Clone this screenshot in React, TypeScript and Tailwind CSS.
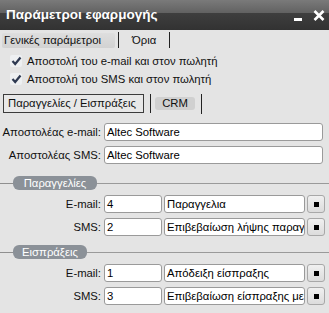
export default function App() {
  const font = { fontFamily: '"Liberation Sans", Arial, sans-serif' };

  const Check = () => (
    <span className="flex h-[12px] w-[12px] shrink-0 items-center justify-center rounded-[2px] bg-[#eef0f2]">
      <svg width="11" height="10" viewBox="0 0 11 10">
        <path d="M1.5 5 L4.2 8 L9.5 1.5" fill="none" stroke="#2f3a52" strokeWidth="2.2" />
      </svg>
    </span>
  );

  const Field = ({ children, className }: { children: React.ReactNode; className?: string }) => (
    <div
      className={`flex h-[18px] shrink-0 items-center overflow-hidden whitespace-nowrap rounded-[3px] border border-[#9a9a9a] bg-white pl-[2px] text-black ${className ?? ''}`}
    >
      {children}
    </div>
  );

  const DotButton = () => (
    <div className="flex h-[18px] w-[18px] items-center justify-center rounded-[3px] border border-[#a8a8a8] bg-[linear-gradient(#f0f0f0,#dcdcdc)]">
      <span className="h-[5px] w-[5px] bg-black" />
    </div>
  );

  const Section = ({ title, pillWidth }: { title: string; pillWidth: string }) => (
    <div className="flex h-[14px] items-center">
      <div className="h-px w-[13px] bg-[#8f8f8f]" />
      <div className={`flex h-[14px] shrink-0 items-center justify-center whitespace-nowrap rounded-[6px] bg-[#8b9198] text-white ${pillWidth}`}>
        {title}
      </div>
      <div className="h-px flex-1 bg-[#9a9a9a]" />
    </div>
  );

  const Label = ({ children }: { children: React.ReactNode }) => (
    <div className="w-[102px] shrink-0 whitespace-nowrap pr-[1px] text-right">{children}</div>
  );

  const CodeRow = ({ label, num, text }: { label: string; num: string; text: string }) => (
    <div className="flex items-center">
      <Label>{label}</Label>
      <Field className="ml-[2px] w-[58px]">{num}</Field>
      <Field className="ml-[2px] w-[141px]">{text}</Field>
      <div className="ml-[2px]">
        <DotButton />
      </div>
    </div>
  );

  return (
    <div className="h-[313px] w-[329px] overflow-hidden bg-[#e4e4e4] text-[11.3px] text-[#111]" style={font}>
      {/* Title bar */}
      <div className="flex h-[30px] items-center bg-[linear-gradient(to_bottom,#7a7a7a_0%,#626262_42%,#3e3e3e_45%,#323232_100%)] pl-[6px] pr-[4px]">
        <span className="whitespace-nowrap text-[13.5px] font-bold text-white">Παράμετροι εφαρμογής</span>
        <div className="ml-auto flex items-center">
          <span className="mt-[8px] h-[3px] w-[8px] bg-white" />
          <svg className="ml-[11px]" width="12" height="11" viewBox="0 0 12 11">
            <path d="M1.5 1 L10.5 10 M10.5 1 L1.5 10" stroke="white" strokeWidth="2.6" />
          </svg>
        </div>
      </div>

      {/* Top tabs */}
      <div className="mt-[2px] flex h-[16px] items-center whitespace-nowrap">
        <div className="ml-[2px] flex h-[15px] w-[113px] shrink-0 items-center rounded-[2px] bg-[linear-gradient(#dedede,#d2d2d2)] pl-[2px]">
          Γενικές παράμετροι
        </div>
        <div className="ml-[3px] h-[16px] w-px bg-[#222]" />
        <div className="ml-[13px]">Όρια</div>
        <div className="ml-[13px] h-[16px] w-px bg-[#222]" />
      </div>

      {/* Checkboxes */}
      <div className="mt-[4px] flex h-[18px] items-center whitespace-nowrap pl-[10px]">
        <Check />
        <span className="ml-[5px]">Αποστολή του e-mail και στον πωλητή</span>
      </div>
      <div className="flex h-[18px] items-center whitespace-nowrap pl-[10px]">
        <Check />
        <span className="ml-[5px]">Αποστολή του SMS και στον πωλητή</span>
      </div>

      {/* Inner tabs */}
      <div className="mt-[6px] flex h-[19px] items-center whitespace-nowrap">
        <div className="ml-[3px] flex h-[19px] w-[141px] shrink-0 items-center border border-[#3c3c3c] bg-[#e8e8e8] pl-[4px]">
          Παραγγελίες / Εισπράξεις
        </div>
        <div className="ml-[6px] h-[19px] w-px bg-[#222]" />
        <div className="ml-[4px] flex h-[13px] w-[40px] items-center justify-center rounded-[3px] bg-[#d0d0d0]">
          CRM
        </div>
        <div className="ml-[6px] h-[20px] w-px bg-[#222]" />
      </div>

      {/* Senders */}
      <div className="mt-[10px] flex flex-col gap-[5px]">
        <div className="flex items-center">
          <Label>Αποστολέας e-mail:</Label>
          <Field className="ml-[2px] w-[219px]">Altec Software</Field>
        </div>
        <div className="flex items-center">
          <Label>Αποστολέας SMS:</Label>
          <Field className="ml-[2px] w-[219px]">Altec Software</Field>
        </div>
      </div>

      {/* Orders */}
      <div className="mt-[12px]">
        <Section title="Παραγγελίες" pillWidth="w-[84px]" />
      </div>
      <div className="mt-[5px] flex flex-col gap-[5px]">
        <CodeRow label="E-mail:" num="4" text="Παραγγελια" />
        <CodeRow label="SMS:" num="2" text="Επιβεβαίωση λήψης παραγγελίας" />
      </div>

      {/* Receipts */}
      <div className="mt-[9px]">
        <Section title="Εισπράξεις" pillWidth="w-[74px]" />
      </div>
      <div className="mt-[5px] flex flex-col gap-[5px]">
        <CodeRow label="E-mail:" num="1" text="Απόδειξη είσπραξης" />
        <CodeRow label="SMS:" num="3" text="Επιβεβαίωση είσπραξης με SMS" />
      </div>
    </div>
  );
}
